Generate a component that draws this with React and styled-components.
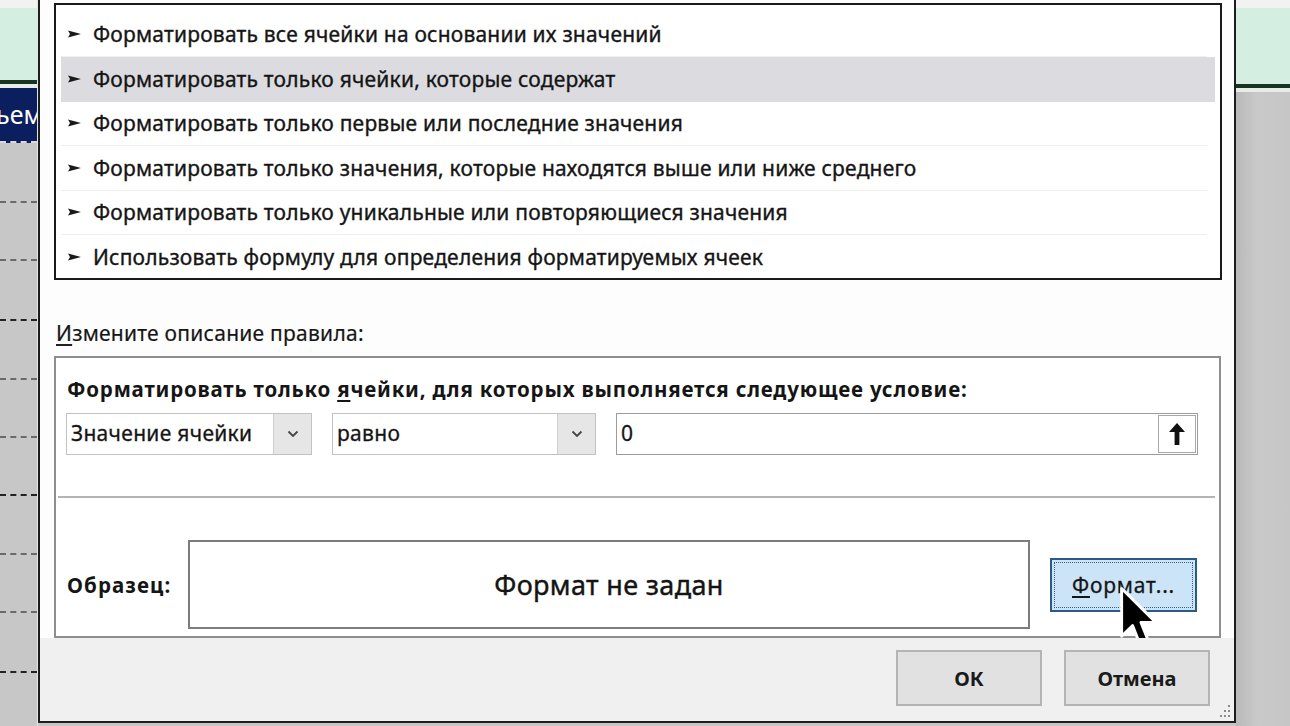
import styled, { createGlobalStyle } from 'styled-components';

const GlobalStyle = createGlobalStyle`
  html, body {
    margin: 0;
    padding: 0;
  }
  body {
    width: 1290px;
    height: 726px;
    overflow: hidden;
    background: #c6c6c6;
    font-family: "Noto Sans", "Open Sans", sans-serif;
    color: #151515;
  }
`;

const rules = [
  'Форматировать все ячейки на основании их значений',
  'Форматировать только ячейки, которые содержат',
  'Форматировать только первые или последние значения',
  'Форматировать только значения, которые находятся выше или ниже среднего',
  'Форматировать только уникальные или повторяющиеся значения',
  'Использовать формулу для определения форматируемых ячеек',
];

const Chevron = () => (
  <svg width="12" height="8" viewBox="0 0 12 8">
    <polyline points="1.5,1.5 6,6 10.5,1.5" fill="none" stroke="#444" strokeWidth="1.8" />
  </svg>
);

const Bullet = () => (
  <svg width="13" height="8" viewBox="0 0 13 8">
    <polygon points="0,0.5 13,4 0,7.5 2,4" fill="#1a1a1a" />
  </svg>
);

const UpArrow = () => (
  <svg width="20" height="26" viewBox="0 0 20 26">
    <path d="M10 2 L18 11 L12.4 11 L12.4 24 L7.6 24 L7.6 11 L2 11 Z" fill="#111" />
  </svg>
);

const Cursor = () => (
  <CursorIcon width="42" height="66" viewBox="0 0 13 20.5">
    <path
      d="M0.8 0.8 L0.8 15.6 L4.2 12.3 L6.6 18.4 L9.2 17.3 L6.8 11.3 L11.4 11.3 Z"
      fill="#000"
      stroke="#fff"
      strokeWidth="0.9"
      strokeLinejoin="round"
    />
  </CursorIcon>
);

const Grip = () => (
  <GripIcon width="14" height="16" viewBox="0 0 14 16">
    {[[11, 2], [7, 7], [11, 7], [3, 12], [7, 12], [11, 12]].map(([x, y]) => (
      <rect key={`${x}-${y}`} x={x} y={y} width="2" height="2" fill="#8a8a8a" />
    ))}
  </GripIcon>
);

const sheetRows = [60, 58, 60, 59, 58, 58, 59, 58, 60, 60];

const App = () => {
  return (
    <Page>
      <GlobalStyle />
      <LeftSheet>
        <SheetTop />
        <SheetMint />
        <SheetLine />
        <SheetHeader>ьем</SheetHeader>
        {sheetRows.map((h, i) => (
          <SheetCell key={i} $h={h} $dark={i % 3 === 2} />
        ))}
      </LeftSheet>

      <Dialog>
        <Upper>
          <RuleList>
            {rules.map((text, i) => (
              <RuleRow key={text} $active={i === 1} $last={i === rules.length - 1}>
                <Bullet />
                <span>{text}</span>
              </RuleRow>
            ))}
          </RuleList>
          <SectionLabel><u>И</u>змените описание правила:</SectionLabel>
        </Upper>

        <Panel>
          <PanelTitle>
            Форматировать только <u>я</u>чейки, для которых выполняется следующее условие:
          </PanelTitle>
          <ControlRow>
            <Combo $w={246}>
              <ComboText>Значение ячейки</ComboText>
              <ComboButton><Chevron /></ComboButton>
            </Combo>
            <Combo $w={264}>
              <ComboText>равно</ComboText>
              <ComboButton><Chevron /></ComboButton>
            </Combo>
            <ValueInput>
              <ComboText>0</ComboText>
              <RefButton><UpArrow /></RefButton>
            </ValueInput>
          </ControlRow>
          <Separator />
          <SampleRow>
            <SampleLabel>Образец:</SampleLabel>
            <Preview>Формат не задан</Preview>
            <FormatButton>
              <FocusRing><u>Ф</u>ормат...</FocusRing>
              <Cursor />
            </FormatButton>
          </SampleRow>
        </Panel>

        <Footer>
          <DialogButton>ОК</DialogButton>
          <DialogButton>Отмена</DialogButton>
          <Grip />
        </Footer>
      </Dialog>

      <RightSheet>
        <SheetTop />
        <SheetMint $h={76} />
        <SheetLine />
        <RightGrey />
      </RightSheet>
    </Page>
  );
};

export default App;

const Page = styled.div`
  display: flex;
  height: 726px;
  width: 1290px;
  overflow: hidden;
`;

const LeftSheet = styled.div`
  width: 37px;
  display: flex;
  flex-direction: column;
  background: #c7c7c7;
  border-right: 1px solid #e4e4e4;
  overflow: hidden;

  & > * {
    flex-shrink: 0;
  }
`;

const SheetTop = styled.div`
  height: 8px;
  flex-shrink: 0;
  background: #f2f2f2;
`;

const SheetMint = styled.div`
  height: ${(p) => p.$h || 72}px;
  flex-shrink: 0;
  background: #d4efe2;
`;

const SheetLine = styled.div`
  height: 4px;
  flex-shrink: 0;
  background: #173322;
  border-bottom: 4px solid #e8ece9;
`;

const SheetHeader = styled.div`
  height: 55px;
  box-sizing: border-box;
  background: #0b1f5e;
  color: #fff;
  font-size: 25px;
  line-height: 52px;
  white-space: nowrap;
  overflow: hidden;
  text-indent: -4px;
  border-bottom: 2px dashed #d8d8e0;
`;

const SheetCell = styled.div`
  height: ${(p) => p.$h}px;
  box-sizing: border-box;
  border-bottom: 2px dashed ${(p) => (p.$dark ? '#222' : '#6a6a6a')};
`;

const RightSheet = styled.div`
  flex: 1;
  display: flex;
  flex-direction: column;
  background: #c4c4c4;
`;

const RightGrey = styled.div`
  flex: 1;
  background: linear-gradient(90deg, #b9b9b9 0%, #c9c9c9 40%, #c6c6c6 100%);
`;

const Dialog = styled.div`
  width: 1198px;
  height: 723px;
  flex-shrink: 0;
  box-sizing: border-box;
  border: 2px solid #1d1d1d;
  border-top: none;
  background: #fdfdfd;
  display: flex;
  flex-direction: column;
`;

const Upper = styled.div`
  padding: 3px 12px 0 14px;
`;

const RuleList = styled.div`
  height: 277px;
  box-sizing: border-box;
  border: 2px solid #1a1a1a;
  background: #fff;
  padding: 7.5px 5px 0;
`;

const RuleRow = styled.div`
  height: 44.5px;
  box-sizing: border-box;
  display: flex;
  align-items: center;
  gap: 12px;
  padding-left: 7px;
  font-size: 21px;
  letter-spacing: 0.2px;
  background: ${(p) => (p.$active ? '#dcdce0' : 'transparent')};
  border-bottom: 1px solid ${(p) => (p.$active || p.$last ? 'transparent' : '#efefef')};
  margin-right: ${(p) => (p.$active ? 0 : 8)}px;
  -webkit-text-stroke: 0.35px #151515;
`;

const SectionLabel = styled.div`
  padding: 41px 0 0 2px;
  height: 35px;
  font-size: 21px;
  letter-spacing: 0.25px;
  line-height: 24px;
  -webkit-text-stroke: 0.2px #222;

  u {
    text-underline-offset: 3px;
  }
`;

const Panel = styled.div`
  margin: 0 13px 0 14px;
  height: 282px;
  box-sizing: border-box;
  border: 2px solid #8e8e8e;
  background: #fff;
  padding-top: 19px;
`;

const PanelTitle = styled.div`
  padding-left: 11px;
  font-size: 20.5px;
  letter-spacing: 0.8px;
  font-weight: 700;
  line-height: 24px;

  u {
    text-underline-offset: 3px;
    text-decoration-thickness: 1.5px;
  }
`;

const ControlRow = styled.div`
  display: flex;
  gap: 20px;
  padding-left: 10px;
  margin-top: 12px;
`;

const Combo = styled.div`
  width: ${(p) => p.$w}px;
  height: 42px;
  box-sizing: border-box;
  border: 1.5px solid #c2c2c2;
  display: flex;
  background: #fff;
`;

const ComboText = styled.div`
  flex: 1;
  padding-left: 4px;
  font-size: 21px;
  letter-spacing: 0.3px;
  line-height: 39px;
  -webkit-text-stroke: 0.3px #151515;
`;

const ComboButton = styled.div`
  width: 37px;
  background: #e6e6e6;
  border-left: 1px solid #cfcfcf;
  display: flex;
  align-items: center;
  justify-content: center;
`;

const ValueInput = styled(Combo)`
  width: 582px;
  border-color: #9c9c9c;
`;

const RefButton = styled.div`
  width: 38px;
  margin: 1px;
  border: 1.5px solid #a8a8a8;
  box-sizing: border-box;
  background: #fff;
  display: flex;
  align-items: center;
  justify-content: center;
`;

const Separator = styled.div`
  height: 2px;
  background: #b4b4b4;
  margin: 41px 4px 0 2px;
`;

const SampleRow = styled.div`
  display: flex;
  align-items: center;
  margin-top: 42px;
  padding-left: 11px;
`;

const SampleLabel = styled.div`
  width: 121px;
  font-size: 20.5px;
  letter-spacing: 1.1px;
  font-weight: 700;
`;

const Preview = styled.div`
  width: 842px;
  height: 89px;
  box-sizing: border-box;
  border: 2px solid #7c7c7c;
  display: flex;
  align-items: center;
  justify-content: center;
  font-size: 27px;
  letter-spacing: 0.35px;
  -webkit-text-stroke: 0.4px #111;
`;

const FormatButton = styled.div`
  position: relative;
  margin-left: 20px;
  width: 147px;
  height: 54px;
  box-sizing: border-box;
  border: 2px solid #2c5a86;
  background: #cce4f7;
  padding: 2px;
`;

const FocusRing = styled.div`
  height: 100%;
  box-sizing: border-box;
  border: 1px dotted #3c5c7c;
  display: flex;
  align-items: center;
  justify-content: center;
  font-size: 21px;
  letter-spacing: 0.8px;
  -webkit-text-stroke: 0.3px #151515;

  u {
    text-underline-offset: 3px;
    text-decoration-thickness: 1.5px;
  }
`;

const CursorIcon = styled.svg`
  position: absolute;
  left: 67px;
  top: 26px;
`;

const Footer = styled.div`
  flex: 1;
  position: relative;
  background: #f0f0f0;
  display: flex;
  justify-content: flex-end;
  align-items: flex-start;
  gap: 22px;
  padding: 12px 24px 0 0;
`;

const DialogButton = styled.div`
  width: 146px;
  height: 56px;
  box-sizing: border-box;
  border: 2px solid #b4b4b4;
  background: #e1e1e1;
  display: flex;
  align-items: center;
  justify-content: center;
  font-size: 20px;
  font-weight: 700;
  color: #1a1a1a;
`;

const GripIcon = styled.svg`
  position: absolute;
  right: 3px;
  bottom: 2px;
`;
